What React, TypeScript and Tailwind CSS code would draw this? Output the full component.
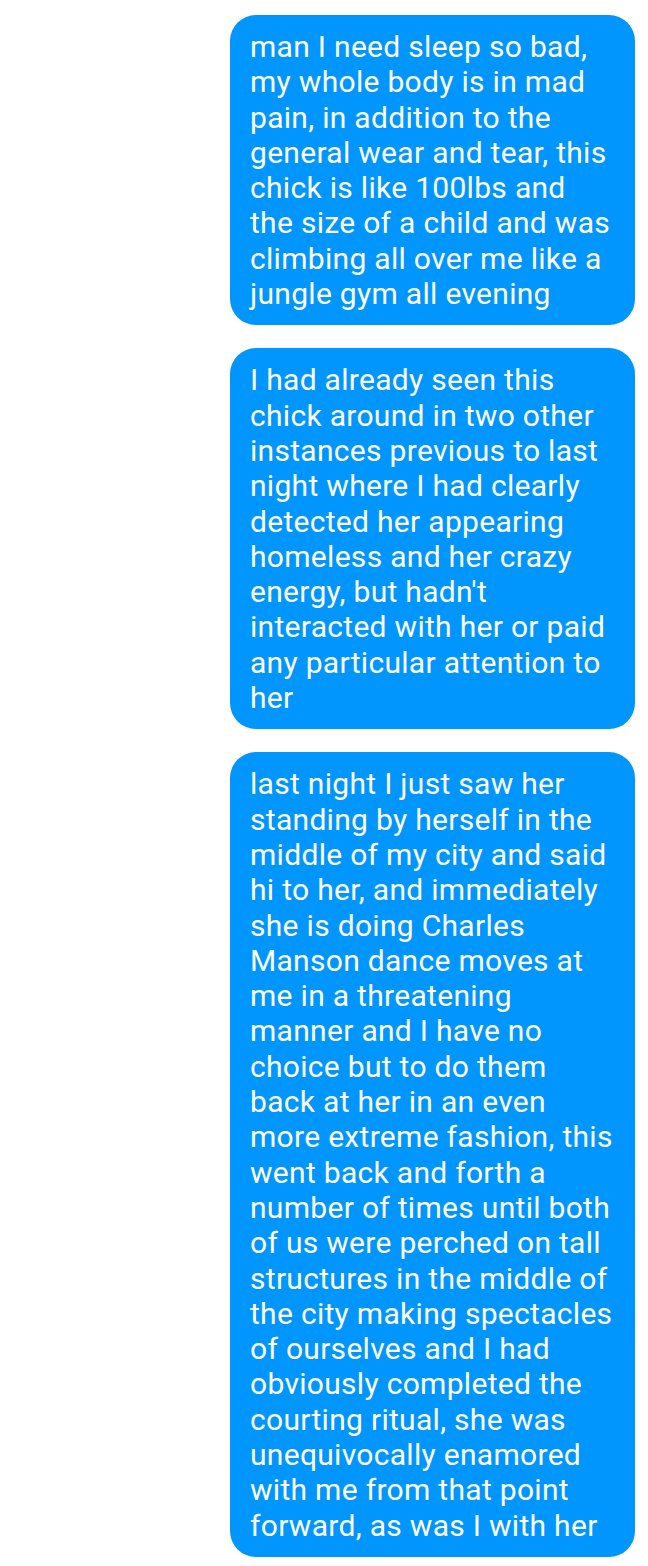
const messages: string[][] = [
  [
    'man I need sleep so bad,',
    'my whole body is in mad',
    'pain, in addition to the',
    'general wear and tear, this',
    'chick is like 100lbs and',
    'the size of a child and was',
    'climbing all over me like a',
    'jungle gym all evening',
  ],
  [
    'I had already seen this',
    'chick around in two other',
    'instances previous to last',
    'night where I had clearly',
    'detected her appearing',
    'homeless and her crazy',
    "energy, but hadn't",
    'interacted with her or paid',
    'any particular attention to',
    'her',
  ],
  [
    'last night I just saw her',
    'standing by herself in the',
    'middle of my city and said',
    'hi to her, and immediately',
    'she is doing Charles',
    'Manson dance moves at',
    'me in a threatening',
    'manner and I have no',
    'choice but to do them',
    'back at her in an even',
    'more extreme fashion, this',
    'went back and forth a',
    'number of times until both',
    'of us were perched on tall',
    'structures in the middle of',
    'the city making spectacles',
    'of ourselves and I had',
    'obviously completed the',
    'courting ritual, she was',
    'unequivocally enamored',
    'with me from that point',
    'forward, as was I with her',
  ],
]

function Bubble({ lines }: { lines: string[] }) {
  return (
    <div className="w-[405px] rounded-[26px] bg-[#0096fe] px-5 py-[14px] text-[30px] leading-[35.3px] tracking-[0.3px] text-white">
      {lines.map((l, i) => (
        <div key={i} className="whitespace-nowrap">
          {l}
        </div>
      ))}
    </div>
  )
}

export default function App() {
  return (
    <div
      className="flex min-h-[1566px] w-[648px] flex-col items-end gap-[23px] bg-white pt-[15px] pr-[13px]"
      style={{ fontFamily: 'Roboto, "Noto Sans", sans-serif' }}
    >
      {messages.map((m, i) => (
        <Bubble key={i} lines={m} />
      ))}
    </div>
  )
}
